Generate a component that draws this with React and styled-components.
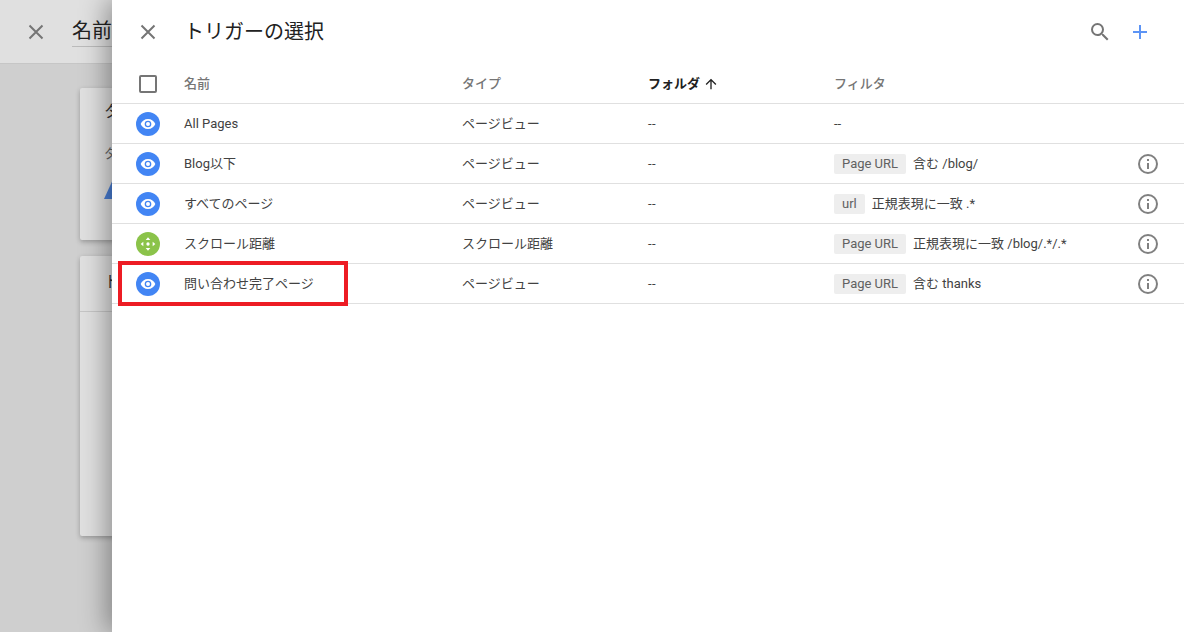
import React from 'react'
import styled, { createGlobalStyle } from 'styled-components'

const GlobalStyle = createGlobalStyle`
  html, body { margin: 0; padding: 0; height: 100%; overflow: hidden; }
  body { font-family: Roboto, "Noto Sans CJK JP", sans-serif; background: #cfcfcf; }
`

const rows = [
  { name: 'All Pages', type: 'ページビュー', folder: '--', plain: '--' },
  { name: 'Blog以下', type: 'ページビュー', folder: '--', chip: 'Page URL', filter: '含む /blog/' },
  { name: 'すべてのページ', type: 'ページビュー', folder: '--', chip: 'url', filter: '正規表現に一致 .*' },
  { name: 'スクロール距離', type: 'スクロール距離', kind: 'scroll', folder: '--', chip: 'Page URL', filter: '正規表現に一致 /blog/.*/.*' },
  { name: '問い合わせ完了ページ', type: 'ページビュー', folder: '--', chip: 'Page URL', filter: '含む thanks', marked: true },
]

const CloseIcon = () => (
  <svg width="24" height="24" viewBox="0 0 24 24" fill="none" stroke="#757575" strokeWidth="2">
    <path d="M5.500 5.500l13 13M18.500 5.500l-13 13" />
  </svg>
)

const EyeIcon = () => (
  <svg width="16" height="16" viewBox="0 0 24 24" fill="#fff">
    <path d="M12 4.500C7 4.500 2.700 7.600 1 12c1.700 4.400 6 7.500 11 7.500s9.300-3.100 11-7.500c-1.700-4.400-6-7.500-11-7.500zM12 17a5 5 0 1 1 0-10 5 5 0 0 1 0 10zm0-8a3 3 0 1 0 0 6 3 3 0 0 0 0-6z" />
  </svg>
)

const MoveIcon = () => (
  <svg width="16" height="16" viewBox="0 0 24 24" fill="#fff">
    <circle cx="12" cy="12" r="2.500" />
    <path d="M12 2l3.500 4h-7zM12 22l-3.500-4h7zM1 12l4-3.500v7zM23 12l-4 3.500v-7z" />
  </svg>
)

const InfoIcon = () => (
  <svg width="24" height="24" viewBox="0 0 24 24" fill="#808080">
    <path d="M12 2a10 10 0 1 0 0 20 10 10 0 0 0 0-20zm0 18a8 8 0 1 1 0-16 8 8 0 0 1 0 16z" />
    <path d="M11 11h2v6h-2zM11 7h2v2h-2z" />
  </svg>
)

const ArrowUpIcon = () => (
  <svg width="16" height="16" viewBox="0 0 24 24" fill="#212121">
    <path d="M20 12l-1.400-1.400L13 16.200V4h-2v12.200l-5.600-5.600L4 12l8 8z" transform="rotate(180 12 12)" />
  </svg>
)

export default function App() {
  return (
    <Page>
      <GlobalStyle />
      <Backdrop>
        <BackHeader>
          <CloseIcon />
          <BackTitle>名前</BackTitle>
        </BackHeader>
        <BackBody>
          <TagCard>
            <CardHeading>タグの設定</CardHeading>
            <CardLabel>タグの種類</CardLabel>
            <TagLogo width="40" height="24" viewBox="0 0 40 24">
              <path d="M11 0L0 24h12L20 6z" fill="#4a7fd6" />
            </TagLogo>
          </TagCard>
          <TriggerCard>
            <TriggerHeading>トリガー</TriggerHeading>
          </TriggerCard>
        </BackBody>
      </Backdrop>

      <Panel>
        <PanelHeader>
          <CloseSlot><CloseIcon /></CloseSlot>
          <PanelTitle>トリガーの選択</PanelTitle>
          <HeaderActions>
            <svg width="24" height="24" viewBox="0 0 24 24" fill="#757575">
              <path d="M15.500 14h-.790l-.280-.270A6.470 6.470 0 0 0 16 9.500 6.500 6.500 0 1 0 9.500 16c1.610 0 3.090-.590 4.230-1.570l.270.280v.790l5 4.990L20.490 19l-4.990-5zm-6 0C7.010 14 5 11.990 5 9.500S7.010 5 9.500 5 14 7.010 14 9.500 11.990 14 9.500 14z" />
            </svg>
            <svg width="24" height="24" viewBox="0 0 24 24" fill="#5c94f5">
              <path d="M19 13h-6v6h-2v-6H5v-2h6V5h2v6h6z" />
            </svg>
          </HeaderActions>
        </PanelHeader>

        <HeadRow>
          <IconCell><CheckBox /></IconCell>
          <NameCell>名前</NameCell>
          <TypeCell>タイプ</TypeCell>
          <FolderHead>フォルダ <ArrowUpIcon /></FolderHead>
          <FilterCell>フィルタ</FilterCell>
        </HeadRow>

        {rows.map((row) => (
          <Row key={row.name}>
            <IconCell>
              <TypeBadge $scroll={row.kind === 'scroll'}>
                {row.kind === 'scroll' ? <MoveIcon /> : <EyeIcon />}
              </TypeBadge>
            </IconCell>
            <NameCell>{row.name}</NameCell>
            <TypeCell>{row.type}</TypeCell>
            <FolderCell>{row.folder}</FolderCell>
            <FilterCell>
              {row.chip && <Chip>{row.chip}</Chip>}
              {row.filter || row.plain}
            </FilterCell>
            <InfoCell>{row.chip && <InfoIcon />}</InfoCell>
            {row.marked && <Highlight />}
          </Row>
        ))}
      </Panel>
    </Page>
  )
}

const Page = styled.div`
  position: relative;
  width: 1184px;
  height: 632px;
  overflow: hidden;
`

const Backdrop = styled.div`
  display: flex;
  flex-direction: column;
  height: 100%;
`

const BackHeader = styled.div`
  display: flex;
  align-items: center;
  gap: 24px;
  height: 64px;
  padding-left: 24px;
  box-sizing: border-box;
  background: #e0e0e0;
  border-bottom: 1px solid #c6c6c6;
`

const BackTitle = styled.div`
  font-size: 20px;
  line-height: 30px;
  color: #222;
  width: 60px;
  margin-bottom: 1px;
  border-bottom: 1px solid #bbb;
`

const BackBody = styled.div`
  display: flex;
  flex-direction: column;
  gap: 16px;
  padding: 24px 0 0 80px;
`

const Card = styled.div`
  width: 600px;
  background: #e0e0e0;
  border-radius: 2px;
  box-shadow: 0 2px 5px rgba(0, 0, 0, 0.26);
  box-sizing: border-box;
`

const TagCard = styled(Card)`
  height: 152px;
  padding: 12px 24px;
`

const TriggerCard = styled(Card)`
  height: 280px;
  padding: 14px 24px;
`

const CardHeading = styled.div`
  font-size: 16px;
  line-height: 24px;
  color: #333;
`

const CardLabel = styled.div`
  font-size: 13px;
  line-height: 20px;
  margin-top: 20px;
  color: #666;
`

const TagLogo = styled.svg`
  display: block;
  margin-top: 11px;
`

const TriggerHeading = styled.div`
  font-size: 16px;
  line-height: 24px;
  padding-bottom: 17px;
  margin: 0 -24px;
  padding-left: 24px;
  color: #333;
  border-bottom: 1px solid #c6c6c6;
`

const Panel = styled.div`
  position: absolute;
  top: 0;
  bottom: 0;
  left: 112px;
  right: 0;
  background: #fff;
  box-shadow: -6px 0 24px rgba(0, 0, 0, 0.35);
`

const PanelHeader = styled.div`
  display: flex;
  align-items: center;
  height: 64px;
`

const CloseSlot = styled.div`
  display: flex;
  justify-content: center;
  width: 72px;
`

const PanelTitle = styled.div`
  flex: 1;
  font-size: 20px;
  line-height: 26px;
  color: #212121;
`

const HeaderActions = styled.div`
  display: flex;
  gap: 16px;
  padding-right: 32px;
`

const Row = styled.div`
  position: relative;
  display: flex;
  align-items: center;
  height: 40px;
  box-sizing: border-box;
  border-bottom: 1px solid #e0e0e0;
  font-size: 13px;
  line-height: 18px;
  color: #424242;
`

const HeadRow = styled(Row)`
  color: #757575;
  font-weight: 500;
`

const IconCell = styled.div`
  display: flex;
  justify-content: center;
  width: 72px;
`

const NameCell = styled.div`
  width: 278px;
`

const TypeCell = styled.div`
  width: 186px;
`

const FolderCell = styled.div`
  width: 186px;
  letter-spacing: 0.5px;
`

const FolderHead = styled(FolderCell)`
  display: flex;
  align-items: center;
  gap: 3px;
  letter-spacing: 0;
  color: #212121;
  font-weight: 700;
`

const FilterCell = styled.div`
  display: flex;
  align-items: center;
  flex: 1;
`

const InfoCell = styled.div`
  display: flex;
  justify-content: center;
  width: 24px;
  margin-right: 24px;
`

const CheckBox = styled.div`
  width: 14px;
  height: 14px;
  border: 2px solid #757575;
  border-radius: 2px;
`

const TypeBadge = styled.div`
  display: flex;
  align-items: center;
  justify-content: center;
  width: 24px;
  height: 24px;
  border-radius: 50%;
  background: ${({ $scroll }) => ($scroll ? '#8bc34a' : '#4285f4')};
`

const Chip = styled.span`
  margin-right: 7px;
  padding: 0 8px;
  height: 20px;
  line-height: 20px;
  background: #eee;
  border-radius: 2px;
  color: #616161;
`

const Highlight = styled.div`
  position: absolute;
  left: 6px;
  top: -3px;
  width: 230px;
  height: 45px;
  box-sizing: border-box;
  border: 4px solid #ed1c24;
  pointer-events: none;
`
